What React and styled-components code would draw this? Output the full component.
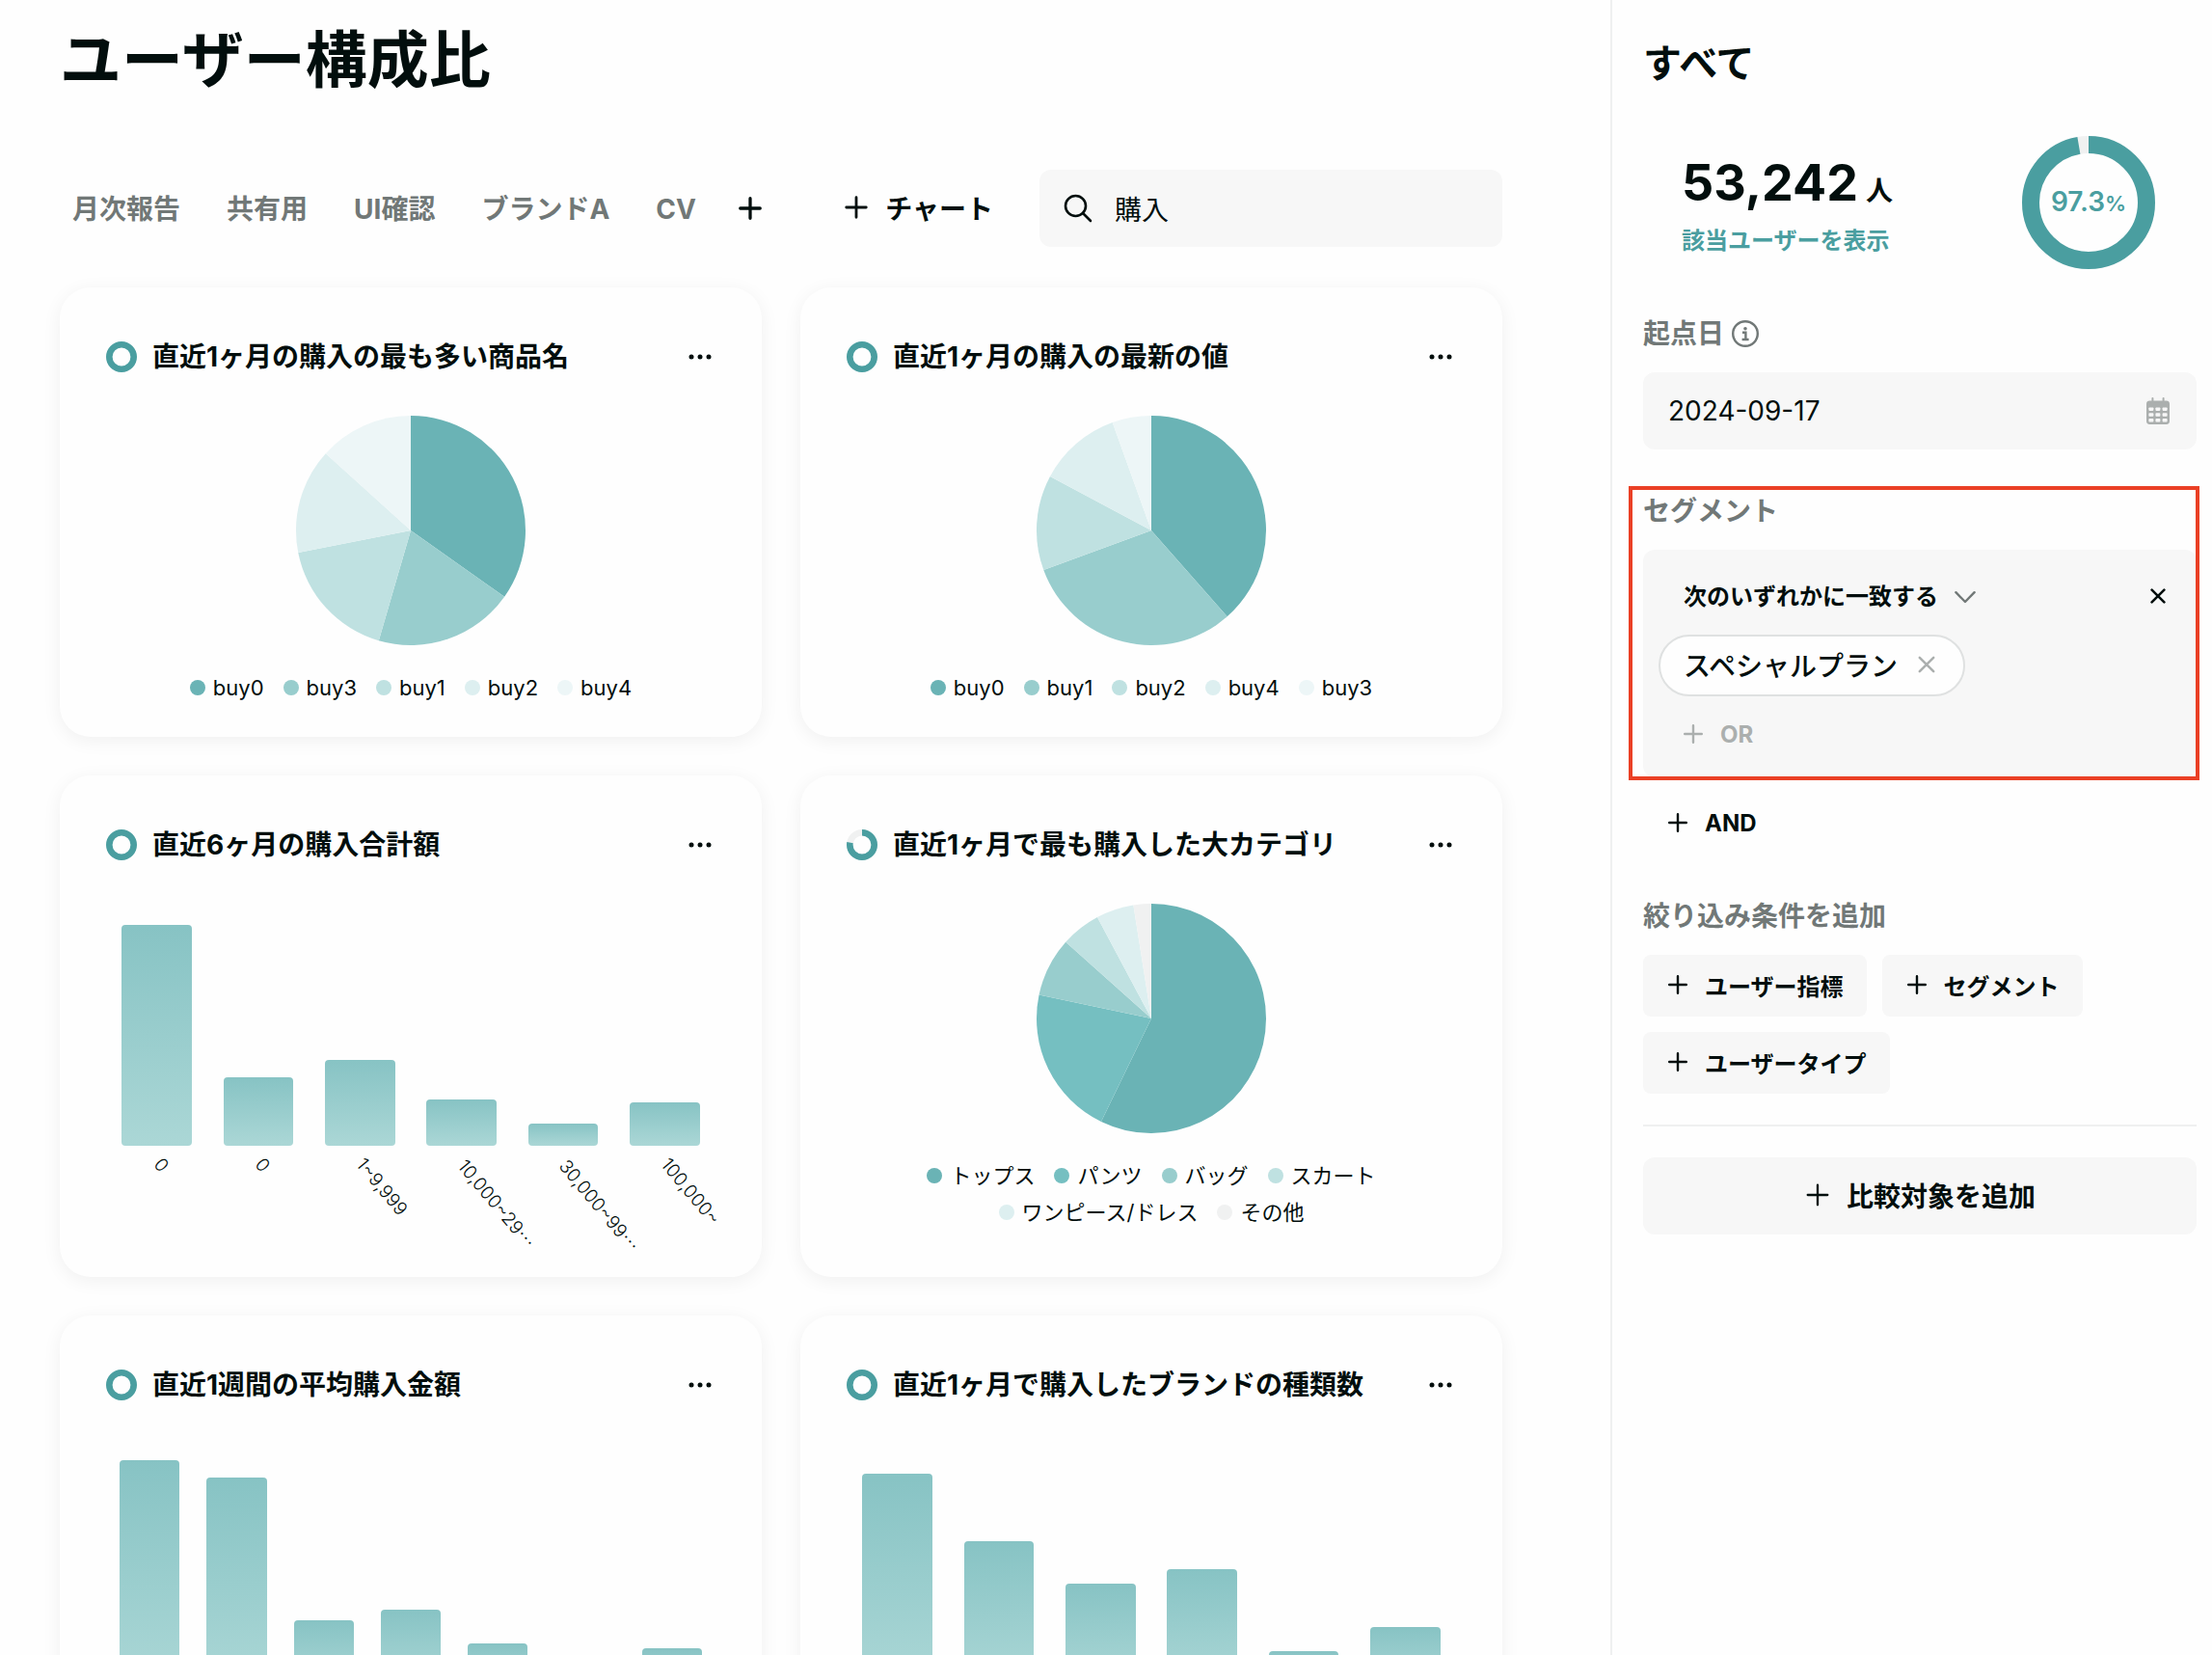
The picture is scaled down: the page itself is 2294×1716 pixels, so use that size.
import React, { useState } from 'react';
import styled, { createGlobalStyle } from 'styled-components';

const colors = {
  text: '#020e0d',
  sub: '#717877',
  mute: '#abafae',
  teal: '#4a9ea0',
  field: '#f7f7f7',
  line: '#eff0f0',
  page: '#fefefe',
};

const tabs = ['月次報告', '共有用', 'UI確認', 'ブランドA', 'CV'];

// slice values are percentages, bar values are pixels at full plot height
const charts = [
  {
    title: '直近1ヶ月の購入の最も多い商品名',
    coverage: 100,
    slices: [
      { name: 'buy0', value: 34.8, color: '#6ab3b5' },
      { name: 'buy3', value: 19.7, color: '#98cdcd' },
      { name: 'buy1', value: 17.4, color: '#bfe1e1' },
      { name: 'buy2', value: 14.8, color: '#ddeff0' },
      { name: 'buy4', value: 13.3, color: '#edf6f7' },
    ],
  },
  {
    title: '直近1ヶ月の購入の最新の値',
    coverage: 100,
    slices: [
      { name: 'buy0', value: 38.5, color: '#6ab3b5' },
      { name: 'buy1', value: 30.9, color: '#98cdcd' },
      { name: 'buy2', value: 13.4, color: '#bfe1e1' },
      { name: 'buy4', value: 11.7, color: '#ddeff0' },
      { name: 'buy3', value: 5.5, color: '#edf6f7' },
    ],
  },
  {
    title: '直近6ヶ月の購入合計額',
    coverage: 100,
    bars: [
      { label: '0', value: 229 },
      { label: '0', value: 71 },
      { label: '1~9,999', value: 89 },
      { label: '10,000~29', cut: true, value: 48 },
      { label: '30,000~99', cut: true, value: 23 },
      { label: '100,000~', value: 45 },
    ],
  },
  {
    title: '直近1ヶ月で最も購入した大カテゴリ',
    coverage: 78,
    slices: [
      { name: 'トップス', value: 57.2, color: '#6ab3b5' },
      { name: 'パンツ', value: 21.1, color: '#75bfc1' },
      { name: 'バッグ', value: 8.3, color: '#98cdcd' },
      { name: 'スカート', value: 5.6, color: '#bfe1e1' },
      { name: 'ワンピース/ドレス', value: 5.3, color: '#ddeff0' },
      { name: 'その他', value: 2.5, color: '#f0f1f1' },
    ],
  },
  {
    title: '直近1週間の平均購入金額',
    coverage: 100,
    bars: [234, 216, 68, 79, 44, 24, 39].map((value) => ({ value })),
  },
  {
    title: '直近1ヶ月で購入したブランドの種類数',
    coverage: 100,
    bars: [220, 150, 106, 121, 36, 61].map((value) => ({ value })),
  },
];

const GlobalStyle = createGlobalStyle`
  * {
    box-sizing: border-box;
  }
  body {
    margin: 0;
    background: ${colors.page};
    color: ${colors.text};
    font-family: Inter, 'Noto Sans CJK JP', sans-serif;
    font-size: 28px;
  }
  h1, h2, h3, p, ul {
    margin: 0;
    padding: 0;
  }
  ul {
    list-style: none;
  }
  button, input, select {
    margin: 0;
    padding: 0;
    border: none;
    background: none;
    color: inherit;
    font: inherit;
  }
  button {
    cursor: pointer;
  }
  svg {
    display: block;
    flex: none;
  }
`;

const Layout = styled.div`
  display: flex;
  height: 100vh;
`;

const Main = styled.main`
  flex: 1;
  min-width: 0;
  padding: 22px 112px 40px 62px;
  overflow-y: auto;
  scrollbar-width: none;
`;

const PageTitle = styled.h1`
  font-size: 64px;
  line-height: 80px;
  font-weight: 700;
`;

const Toolbar = styled.div`
  display: flex;
  align-items: center;
  gap: 48px;
  margin: 74px 0 42px;
`;

const TabBar = styled.nav`
  display: flex;
  align-items: center;
  gap: 42px;
  flex: 1;
  padding-left: 13px;
`;

const TabList = styled.ul`
  display: flex;
  gap: 48px;
  padding-top: 2px;
`;

const Tab = styled.a`
  color: ${colors.sub};
  font-weight: 700;
  line-height: 40px;
  text-decoration: none;
  white-space: nowrap;
`;

const IconButton = styled.button`
  display: flex;
  align-items: center;
  justify-content: center;
  width: ${(props) => props.$size || 32}px;
  height: ${(props) => props.$size || 32}px;
`;

const ChartButton = styled.button`
  display: flex;
  align-items: center;
  gap: 16px;
  height: 80px;
  padding-bottom: 2px;
  font-weight: 700;
  white-space: nowrap;
`;

const SearchBox = styled.label`
  display: flex;
  align-items: center;
  gap: 22px;
  width: 480px;
  height: 80px;
  padding: 0 24px;
  border-radius: 12px;
  background: ${colors.field};
`;

const TextInput = styled.input`
  flex: 1;
  min-width: 0;
  height: 48px;
  outline: none;
`;

const CardGrid = styled.div`
  display: grid;
  grid-template-columns: repeat(2, minmax(0, 1fr));
  gap: 40px;
`;

const Card = styled.article`
  padding: 48px 48px 32px;
  border-radius: 32px;
  background: ${colors.page};
  box-shadow: 0 4px 20px rgba(0, 0, 0, 0.06);
`;

const CardHeader = styled.header`
  display: flex;
  align-items: center;
  gap: 16px;
  height: 48px;
  margin-bottom: 36px;
`;

const CardTitle = styled.h2`
  flex: 1;
  font-size: 28px;
  line-height: 40px;
  font-weight: 700;
`;

const PieWrapper = styled.div`
  display: flex;
  justify-content: center;
`;

const Legend = styled.ul`
  display: flex;
  flex-wrap: wrap;
  justify-content: center;
  column-gap: 20px;
  margin-top: 24px;
`;

const LegendItem = styled.li`
  display: flex;
  align-items: center;
  gap: 8px;
  font-size: 22px;
  line-height: 38px;

  &::before {
    content: '';
    width: 16px;
    height: 16px;
    border-radius: 50%;
    background: ${(props) => props.$color};
  }
`;

const Plot = styled.div`
  display: flex;
  height: 252px;
`;

const Slot = styled.div`
  display: flex;
  flex: 1;
  align-items: flex-end;
  justify-content: center;
`;

const Bar = styled.div`
  width: 69%;
  border-radius: 4px;
  background: linear-gradient(#87c3c4, #abd7d6);
`;

const Ticks = styled.div`
  display: flex;
  height: 104px;
  padding-top: 6px;
`;

const Tick = styled.div`
  flex: 1;
  min-width: 0;
  padding-left: calc(100% / 12);
`;

const TickLabel = styled.div`
  width: 0;
  font-size: 19px;
  line-height: 20px;
  font-weight: 300;
  white-space: nowrap;
  transform: rotate(50deg);
  transform-origin: 0 50%;
`;

const Ellipsis = styled.span`
  font-family: 'Noto Sans CJK JP', sans-serif;
`;

const Sidebar = styled.aside`
  flex: none;
  width: 624px;
  padding: 42px 16px 40px 32px;
  border-left: 2px solid ${colors.line};
`;

const SidebarTitle = styled.h2`
  font-size: 40px;
  line-height: 48px;
  font-weight: 700;
`;

const Summary = styled.div`
  display: flex;
  align-items: center;
  justify-content: space-between;
  margin: 48px 0 44px;
  padding: 0 40px;
`;

const SummaryText = styled.div`
  padding-top: 6px;
`;

const Total = styled.p`
  font-size: 52px;
  line-height: 64px;
  font-weight: 700;
`;

const Unit = styled.span`
  margin-left: 8px;
  font-size: 28px;
  line-height: 40px;
`;

const UserLink = styled.a`
  display: block;
  margin-top: 10px;
  color: ${colors.teal};
  font-size: 24px;
  line-height: 36px;
  font-weight: 700;
  text-decoration: none;
`;

const Donut = styled.div`
  display: grid;
  place-items: center;
  color: ${colors.teal};

  > * {
    grid-area: 1 / 1;
  }
`;

const Rate = styled.p`
  font-size: 28px;
  line-height: 32px;
  font-weight: 600;

  small {
    font-size: 22px;
  }
`;

const Section = styled.section`
  position: relative;
  margin-top: 44px;
`;

const SectionLabel = styled.h3`
  display: flex;
  align-items: center;
  gap: 8px;
  margin-bottom: 20px;
  color: ${colors.sub};
  font-size: 28px;
  line-height: 40px;
  font-weight: 700;
`;

const DateField = styled.div`
  display: flex;
  align-items: center;
  height: 80px;
  padding: 0 28px 0 26px;
  border-radius: 12px;
  background: ${colors.field};
`;

// red frame that calls out the segment block
const Highlight = styled.div`
  position: absolute;
  inset: -6px -3px -3px -15px;
  border: 4px solid #ea4025;
  pointer-events: none;
`;

const SegmentBox = styled.div`
  padding: 20px 16px;
  border-radius: 12px;
  background: ${colors.field};
`;

const ConditionRow = styled.div`
  display: flex;
  align-items: center;
  justify-content: space-between;
  height: 56px;
  margin-bottom: 12px;
  padding: 0 8px 0 26px;
`;

const ConditionSelect = styled.label`
  display: flex;
  align-items: center;
  gap: 16px;
  font-size: 24px;
  font-weight: 700;

  select {
    appearance: none;
    height: 40px;
    outline: none;
  }
`;

const Chip = styled.div`
  display: inline-flex;
  align-items: center;
  gap: 14px;
  height: 64px;
  padding: 0 22px 2px 24px;
  border: 2px solid #dfe1e1;
  border-radius: 32px;
  background: ${colors.page};
  font-weight: 500;
`;

const AddButton = styled.button`
  display: flex;
  align-items: center;
  justify-content: center;
  gap: 16px;
  height: ${(props) => (props.$large ? 80 : 64)}px;
  width: ${(props) => (props.$large ? '100%' : 'auto')};
  padding: 0 24px 2px;
  border-radius: ${(props) => (props.$large ? 12 : 8)}px;
  background: ${(props) => (props.$plain ? 'none' : colors.field)};
  color: ${(props) => (props.$muted ? colors.mute : colors.text)};
  font-size: ${(props) => (props.$large ? 28 : 24)}px;
  font-weight: 700;
`;

const OrRow = styled.div`
  display: flex;
  align-items: center;
  height: 48px;
  margin-top: 16px;
`;

const AndRow = styled.div`
  display: flex;
  margin-top: 16px;
`;

const ButtonList = styled.div`
  display: flex;
  flex-wrap: wrap;
  gap: 16px;
`;

const Divider = styled.hr`
  height: 2px;
  margin: 32px 0;
  border: none;
  background: ${colors.line};
`;

function PlusIcon({ size = 24, width = 2.4 }) {
  return (
    <svg width={size} height={size} viewBox="0 0 24 24" fill="none" stroke="currentColor" strokeWidth={width} strokeLinecap="round">
      <path d="M12 3.2v17.6M3.2 12h17.6" />
    </svg>
  );
}

function CrossIcon({ size, width = 2.8, color = 'currentColor' }) {
  return (
    <svg width={size} height={size} viewBox="0 0 20 20" fill="none" stroke={color} strokeWidth={width} strokeLinecap="round">
      <path d="M2 2l16 16M18 2L2 18" />
    </svg>
  );
}

function SearchIcon() {
  return (
    <svg width="32" height="32" viewBox="0 0 32 32" fill="none" stroke="currentColor" strokeWidth="2.6" strokeLinecap="round">
      <circle cx="13.5" cy="13.5" r="10.5" />
      <path d="M21 21l8 8" />
    </svg>
  );
}

function MoreIcon() {
  return (
    <svg width="24" height="24" viewBox="0 0 24 24" fill="currentColor">
      <circle cx="3" cy="12" r="2.5" />
      <circle cx="12" cy="12" r="2.5" />
      <circle cx="21" cy="12" r="2.5" />
    </svg>
  );
}

function InfoIcon() {
  return (
    <svg width="28" height="28" viewBox="0 0 28 28" fill="none" stroke="currentColor" strokeWidth="2.4">
      <circle cx="14" cy="14" r="12.8" />
      <circle cx="14" cy="8.8" r="1.8" fill="currentColor" stroke="none" />
      <path d="M11 12.8h3.4v7M10.6 20h7" />
    </svg>
  );
}

function ChevronIcon() {
  return (
    <svg width="24" height="24" viewBox="0 0 24 24" fill="none" stroke={colors.sub} strokeWidth="2.4" strokeLinecap="round" strokeLinejoin="round">
      <path d="M2.4 8.2L12 18l9.6-9.8" />
    </svg>
  );
}

function CalendarIcon() {
  return (
    <svg width="24" height="28" viewBox="0 0 24 28" fill={colors.mute}>
      <rect x="5.4" width="2" height="6" rx="1" />
      <rect x="16.6" width="2" height="6" rx="1" />
      <rect y="3.4" width="24" height="24.6" rx="3.4" />
      {[10.4, 16.2, 22].map((y) =>
        [2.4, 9.4, 16.6].map((x) => (
          <rect key={`${x}-${y}`} x={x} y={y} width="5" height="3.5" rx="0.8" fill={colors.field} />
        ))
      )}
    </svg>
  );
}

function Ring({ size, radius, width, value }) {
  const center = size / 2;
  return (
    <svg width={size} height={size} viewBox={`0 0 ${size} ${size}`} fill="none" strokeWidth={width}>
      <circle cx={center} cy={center} r={radius} stroke={value < 100 ? '#f0f1f1' : colors.teal} />
      {value < 100 && (
        <circle
          cx={center}
          cy={center}
          r={radius}
          stroke={colors.teal}
          pathLength="100"
          strokeDasharray={`${value} 100`}
          transform={`rotate(-90 ${center} ${center})`}
        />
      )}
    </svg>
  );
}

function point(percent) {
  const angle = (percent / 100) * Math.PI * 2;
  return `${120 + 119 * Math.sin(angle)} ${120 - 119 * Math.cos(angle)}`;
}

function PieChart({ slices }) {
  let total = 0;
  const paths = slices.map((slice) => {
    const start = total;
    total += slice.value;
    const large = slice.value > 50 ? 1 : 0;
    return (
      <path
        key={slice.name}
        fill={slice.color}
        d={`M120 120L${point(start)}A119 119 0 ${large} 1 ${point(total)}Z`}
      />
    );
  });

  return (
    <>
      <PieWrapper>
        <svg width="240" height="240" viewBox="0 0 240 240">
          {paths}
        </svg>
      </PieWrapper>
      <Legend>
        {slices.map((slice) => (
          <LegendItem key={slice.name} $color={slice.color}>
            {slice.name}
          </LegendItem>
        ))}
      </Legend>
    </>
  );
}

function BarChart({ bars }) {
  return (
    <>
      <Plot>
        {bars.map((bar, i) => (
          <Slot key={i}>
            <Bar style={{ height: bar.value }} />
          </Slot>
        ))}
      </Plot>
      <Ticks>
        {bars.map((bar, i) => (
          <Tick key={i}>
            {bar.label && (
              <TickLabel>
                {bar.label}
                {bar.cut && <Ellipsis>…</Ellipsis>}
              </TickLabel>
            )}
          </Tick>
        ))}
      </Ticks>
    </>
  );
}

function ChartCard({ chart }) {
  return (
    <Card>
      <CardHeader>
        <Ring size={32} radius={12.7} width={6.6} value={chart.coverage} />
        <CardTitle>{chart.title}</CardTitle>
        <IconButton aria-label="メニュー">
          <MoreIcon />
        </IconButton>
      </CardHeader>
      {chart.slices ? <PieChart slices={chart.slices} /> : <BarChart bars={chart.bars} />}
    </Card>
  );
}

function App() {
  const [keyword, setKeyword] = useState('購入');
  const [date, setDate] = useState('2024-09-17');

  return (
    <Layout lang="ja">
      <GlobalStyle />
      <Main>
        <PageTitle>ユーザー構成比</PageTitle>
        <Toolbar>
          <TabBar>
            <TabList>
              {tabs.map((tab) => (
                <li key={tab}>
                  <Tab href="#">{tab}</Tab>
                </li>
              ))}
            </TabList>
            <IconButton $size={28} aria-label="タブを追加">
              <PlusIcon size={28} width={2.8} />
            </IconButton>
          </TabBar>
          <ChartButton>
            <PlusIcon size={28} />
            チャート
          </ChartButton>
          <SearchBox>
            <SearchIcon />
            <TextInput
              aria-label="検索"
              value={keyword}
              onChange={(e) => setKeyword(e.target.value)}
            />
          </SearchBox>
        </Toolbar>
        <CardGrid>
          {charts.map((chart) => (
            <ChartCard key={chart.title} chart={chart} />
          ))}
        </CardGrid>
      </Main>

      <Sidebar>
        <SidebarTitle>すべて</SidebarTitle>
        <Summary>
          <SummaryText>
            <Total>
              53,242
              <Unit>人</Unit>
            </Total>
            <UserLink href="#">該当ユーザーを表示</UserLink>
          </SummaryText>
          <Donut>
            <Ring size={144} radius={60} width={18} value={97.3} />
            <Rate>
              97.3<small>%</small>
            </Rate>
          </Donut>
        </Summary>

        <Section>
          <SectionLabel>
            <label htmlFor="base-date">起点日</label>
            <InfoIcon />
          </SectionLabel>
          <DateField>
            <TextInput id="base-date" value={date} onChange={(e) => setDate(e.target.value)} />
            <CalendarIcon />
          </DateField>
        </Section>

        <Section>
          <SectionLabel>セグメント</SectionLabel>
          <SegmentBox>
            <ConditionRow>
              <ConditionSelect>
                <select aria-label="一致条件">
                  <option>次のいずれかに一致する</option>
                </select>
                <ChevronIcon />
              </ConditionSelect>
              <IconButton aria-label="条件を削除">
                <CrossIcon size={16} width={3.2} />
              </IconButton>
            </ConditionRow>
            <Chip>
              スペシャルプラン
              <IconButton aria-label="スペシャルプランを外す">
                <CrossIcon size={18} color={colors.mute} />
              </IconButton>
            </Chip>
            <OrRow>
              <AddButton $plain $muted>
                <PlusIcon />
                OR
              </AddButton>
            </OrRow>
          </SegmentBox>
          <Highlight />
        </Section>
        <AndRow>
          <AddButton $plain>
            <PlusIcon />
            AND
          </AddButton>
        </AndRow>

        <Section>
          <SectionLabel>絞り込み条件を追加</SectionLabel>
          <ButtonList>
            {['ユーザー指標', 'セグメント', 'ユーザータイプ'].map((name) => (
              <AddButton key={name}>
                <PlusIcon />
                {name}
              </AddButton>
            ))}
          </ButtonList>
        </Section>

        <Divider />
        <AddButton $large>
          <PlusIcon size={28} width={2} />
          比較対象を追加
        </AddButton>
      </Sidebar>
    </Layout>
  );
}

export default App;
